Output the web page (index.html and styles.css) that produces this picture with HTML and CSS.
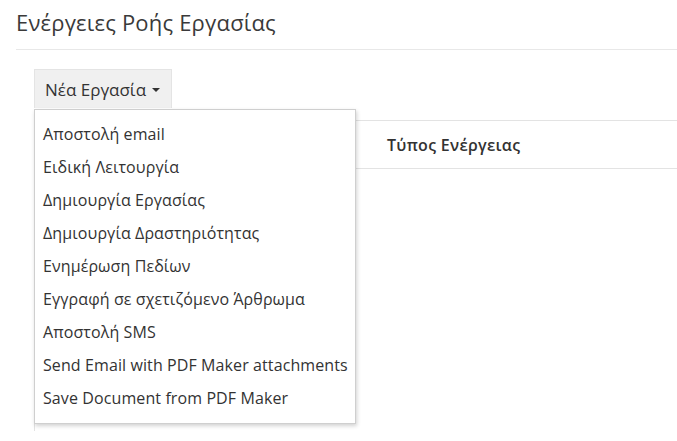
FILE: index.html
```html
<!DOCTYPE html>
<html lang="el">
<head>
<meta charset="utf-8">
<link rel="stylesheet" href="styles.css">
</head>
<body>
<div class="page">
  <h1 class="title">Ενέργειες Ροής Εργασίας</h1>
  <div class="content">
    <div class="toolbar">
      <div class="dropdown">
        <button class="btn">Νέα Εργασία <span class="caret"></span></button>
        <ul class="menu">
          <li>Αποστολή email</li>
          <li>Ειδική Λειτουργία</li>
          <li>Δημιουργία Εργασίας</li>
          <li>Δημιουργία Δραστηριότητας</li>
          <li>Ενημέρωση Πεδίων</li>
          <li>Εγγραφή σε σχετιζόμενο Άρθρωμα</li>
          <li>Αποστολή SMS</li>
          <li>Send Email with PDF Maker attachments</li>
          <li>Save Document from PDF Maker</li>
        </ul>
      </div>
    </div>
    <table class="table">
      <thead>
        <tr><th class="c1"></th><th class="c2">Τύπος Ενέργειας</th></tr>
      </thead>
      <tbody>
        <tr><td class="c1"></td><td class="c2"></td></tr>
      </tbody>
    </table>
  </div>
</div>
</body>
</html>
```
FILE: styles.css
```css
html, body {
  margin: 0;
  padding: 0;
  background: #fff;
  font-family: "Open Sans", "Liberation Sans", sans-serif;
  color: #333;
  overflow: hidden;
}
.page {
  padding: 0 0 0 16px;
}
.title {
  margin: 0;
  padding: 8px 0 12px;
  font-size: 22px;
  font-weight: 400;
  letter-spacing: 0.2px;
  line-height: 29px;
  color: #3a3a3a;
  border-bottom: 1px solid #e8e8e8;
}
.content {
  padding: 19px 0 0 18px;
}
.toolbar {
  height: 51px;
}
.dropdown {
  position: relative;
  display: inline-block;
}
.btn {
  font-family: inherit;
  font-size: 17px;
  color: #333;
  background: #f0f0f0;
  border: 1px solid #e4e4e4;
  border-bottom: none;
  height: 39px;
  padding: 0 9px 0 10px;
  width: 138px;
  text-align: left;
  display: flex;
  align-items: center;
  gap: 6px;
  cursor: pointer;
}
.caret {
  display: inline-block;
  width: 0;
  height: 0;
  border-left: 4.5px solid transparent;
  border-right: 4.5px solid transparent;
  border-top: 4.5px solid #333;
  margin-top: 2px;
}
.menu {
  position: absolute;
  top: 40px;
  left: 0;
  z-index: 10;
  margin: 0;
  padding: 8px 0;
  list-style: none;
  width: 320px;
  background: #fff;
  border: 1px solid #cfcfcf;
  box-shadow: 1px 2px 4px rgba(0,0,0,0.18);
}
.menu li {
  height: 33px;
  line-height: 33px;
  padding: 0 8px;
  font-size: 16px;
  letter-spacing: 0.1px;
  color: #333;
  white-space: nowrap;
}
.table {
  border-collapse: collapse;
  width: 100%;
  border-left: 1px solid #e3e3e3;
}
.table th {
  text-align: left;
  font-weight: 600;
  font-size: 16px;
  letter-spacing: 0.3px;
  height: 47px;
  padding: 0 16px;
  border-top: 1px solid #e3e3e3;
  border-bottom: 1px solid #e3e3e3;
  color: #333;
}
.table td {
  height: 260px;
}
.table .c1 {
  width: 304px;
}
```
